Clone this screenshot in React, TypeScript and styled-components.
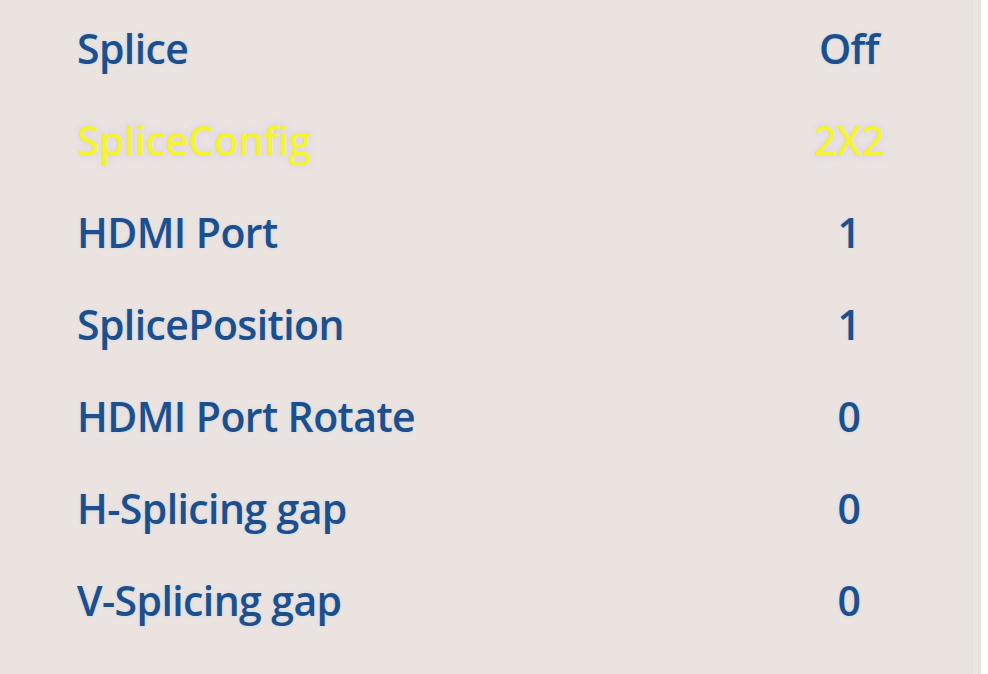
import React from "react";
import styled, { createGlobalStyle } from "styled-components";

const Global = createGlobalStyle`
  html, body { margin: 0; padding: 0; background: #ffffff; }
  #root { width: 988px; height: 674px; }
`;

const Panel = styled.div`
  width: 981px;
  height: 674px;
  box-sizing: border-box;
  background: #eae3e0;
  padding: 2px 69px 0 77px;
  border-right: 3px solid #e9e1de;
  box-shadow: inset -5px 0 0 #ece6e3, inset -7px 0 0 #e8e0dd;
  font-family: "Open Sans", "Noto Sans", sans-serif;
  font-weight: 600;
`;

const Row = styled.div<{ active?: boolean }>`
  display: grid;
  grid-template-columns: 1fr 120px;
  height: 92px;
  line-height: 92px;
  font-size: 41px;
  letter-spacing: -0.6px;
  color: ${(p) => (p.active ? "#f4f432" : "#1c4f8b")};
  text-shadow: ${(p) =>
    p.active
      ? "0 0 6px rgba(214, 200, 250, 0.9)"
      : "0 0 3px rgba(160, 205, 255, 0.45)"};
`;

const Label = styled.span`
  white-space: nowrap;
`;

const Value = styled.span`
  text-align: center;
  white-space: nowrap;
`;

const items: { label: string; value: string; active?: boolean }[] = [
  { label: "Splice", value: "Off" },
  { label: "SpliceConfig", value: "2X2", active: true },
  { label: "HDMI Port", value: "1" },
  { label: "SplicePosition", value: "1" },
  { label: "HDMI Port Rotate", value: "0" },
  { label: "H-Splicing gap", value: "0" },
  { label: "V-Splicing gap", value: "0" },
];

export default function App() {
  return (
    <>
      <Global />
      <Panel>
        {items.map((it) => (
          <Row key={it.label} active={it.active}>
            <Label>{it.label}</Label>
            <Value>{it.value}</Value>
          </Row>
        ))}
      </Panel>
    </>
  );
}
